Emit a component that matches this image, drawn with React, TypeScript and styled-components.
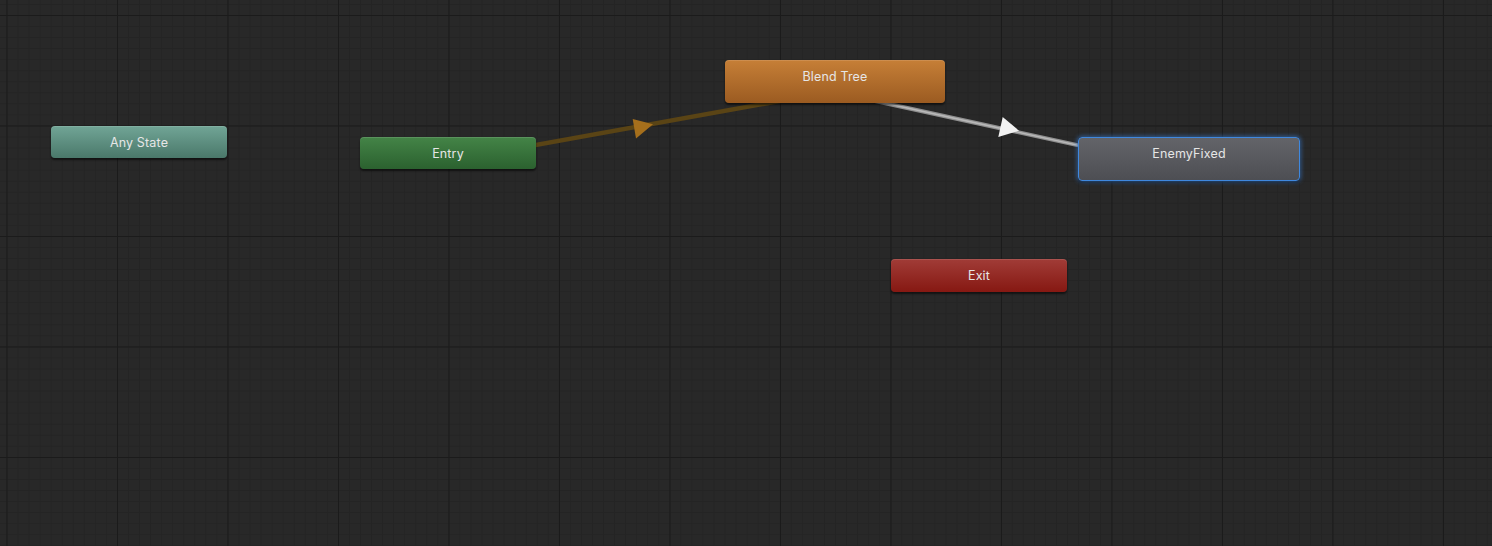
import React from "react";
import styled, { createGlobalStyle, css } from "styled-components";

const Global = createGlobalStyle`
  html, body { margin: 0; padding: 0; background: #282828; }
  body { font-family: Inter, "Noto Sans", "Liberation Sans", sans-serif; }
`;

const Canvas = styled.div`
  position: relative;
  width: 1492px;
  height: 546px;
  overflow: hidden;
  background-color: #282828;
  background-image:
    linear-gradient(to right, #1b1b1b 0 1px, transparent 1px),
    linear-gradient(to bottom, #1b1b1b 0 1px, transparent 1px),
    linear-gradient(to right, #242424 0 1px, transparent 1px),
    linear-gradient(to bottom, #242424 0 1px, transparent 1px);
  background-size: 110.5px 110.5px, 110.5px 110.5px, 11.05px 11.05px, 11.05px 11.05px;
  background-position: 6.5px 15px, 6.5px 15px, 6.5px 15px, 6.5px 15px;
`;

const Wires = styled.svg`
  position: absolute;
  inset: 0;
  width: 1492px;
  height: 546px;
`;

type Kind = "any" | "entry" | "blend" | "state" | "exit";

const palette: Record<Kind, string> = {
  any: "linear-gradient(to bottom, #71a596, #4a786a)",
  entry: "linear-gradient(to bottom, #448447, #2b612f)",
  blend: "linear-gradient(to bottom, #c67f37, #9b5b21)",
  state: "linear-gradient(to bottom, #636469, #4d4e53)",
  exit: "linear-gradient(to bottom, #a13c37, #861812)",
};

const Node = styled.div<{ $kind: Kind; $selected?: boolean }>`
  position: absolute;
  box-sizing: border-box;
  display: flex;
  justify-content: center;
  align-items: flex-start;
  padding-top: 9px;
  border-radius: 4px;
  background: ${(p) => palette[p.$kind]};
  color: #e6e6e6;
  font-size: 12.5px;
  line-height: 16px;
  letter-spacing: 0.15px;
  box-shadow: 0 1px 0 rgba(255, 255, 255, 0.12) inset, 0 2px 2px rgba(0, 0, 0, 0.55);
  ${(p) =>
    p.$selected &&
    css`
      border: 1.5px solid #3f88de;
      padding-top: 7.5px;
      box-shadow: 0 0 4px 1px rgba(60, 130, 220, 0.6), 0 2px 2px rgba(0, 0, 0, 0.55);
    `}
`;

const nodes: { label: string; kind: Kind; x: number; y: number; w: number; h: number; selected?: boolean }[] = [
  { label: "Any State", kind: "any", x: 51, y: 126, w: 176, h: 32 },
  { label: "Entry", kind: "entry", x: 360, y: 137, w: 176, h: 32 },
  { label: "Blend Tree", kind: "blend", x: 725, y: 60, w: 220, h: 43 },
  { label: "EnemyFixed", kind: "state", x: 1078, y: 137, w: 222, h: 44, selected: true },
  { label: "Exit", kind: "exit", x: 891, y: 259, w: 176, h: 33 },
];

export default function App() {
  return (
    <>
      <Global />
      <Canvas>
        <Wires viewBox="0 0 1492 546">
          <line x1={448} y1={160.8} x2={835} y2={91} stroke="#5a4415" strokeWidth={4.5} />
          <polygon points="632.7,119 636,138.5 653,124.3" fill="#a56f1c" />
          <line x1={835} y1={92.2} x2={1189} y2={169.4} stroke="#8f8f8f" strokeWidth={4} />
          <line x1={835} y1={92.2} x2={1189} y2={169.4} stroke="#b8b8b8" strokeWidth={1.5} />
          <polygon points="1002.7,117 998.3,137 1019,130.7" fill="#f2f2f2" />
        </Wires>
        {nodes.map((n) => (
          <Node
            key={n.label}
            $kind={n.kind}
            $selected={n.selected}
            style={{ left: n.x, top: n.y, width: n.w, height: n.h }}
          >
            {n.label}
          </Node>
        ))}
      </Canvas>
    </>
  );
}
